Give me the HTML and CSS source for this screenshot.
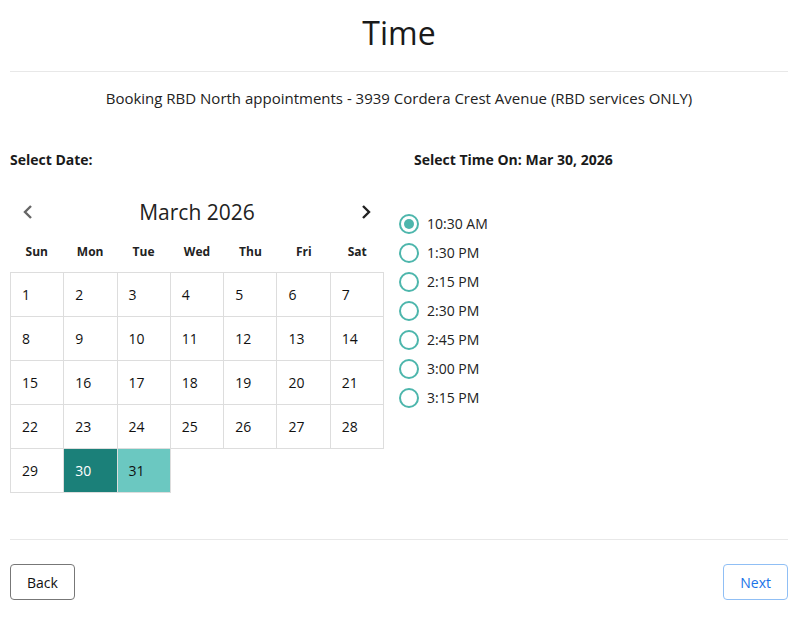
FILE: index.html
```html
<!DOCTYPE html>
<html lang="en">
<head>
<meta charset="UTF-8" />
<meta name="viewport" content="width=device-width, initial-scale=1" />
<title>Time</title>
<link rel="stylesheet" href="styles.css">
</head>
<body>
  <div class="page">
    <h1 class="title">Time</h1>
    <hr class="rule" />
    <p class="subtitle">Booking RBD North appointments - 3939 Cordera Crest Avenue (RBD services ONLY)</p>

    <div class="columns">
      <div class="date-col">
        <div class="label">Select Date:</div>
        <div class="month-nav">
          <button class="nav-btn prev">
            <svg width="12" height="16" viewBox="0 0 12 16"><path d="M9 2 L3 8 L9 14" fill="none" stroke="#666" stroke-width="2.4"/></svg>
          </button>
          <div class="month">March 2026</div>
          <button class="nav-btn next">
            <svg width="12" height="16" viewBox="0 0 12 16"><path d="M3 2 L9 8 L3 14" fill="none" stroke="#222" stroke-width="2.4"/></svg>
          </button>
        </div>
        <div class="weekdays">
          <div>Sun</div><div>Mon</div><div>Tue</div><div>Wed</div><div>Thu</div><div>Fri</div><div>Sat</div>
        </div>
        <div class="grid">
          <div class="day">1</div><div class="day">2</div><div class="day">3</div><div class="day">4</div><div class="day">5</div><div class="day">6</div><div class="day">7</div>
          <div class="day">8</div><div class="day">9</div><div class="day">10</div><div class="day">11</div><div class="day">12</div><div class="day">13</div><div class="day">14</div>
          <div class="day">15</div><div class="day">16</div><div class="day">17</div><div class="day">18</div><div class="day">19</div><div class="day">20</div><div class="day">21</div>
          <div class="day">22</div><div class="day">23</div><div class="day">24</div><div class="day">25</div><div class="day">26</div><div class="day">27</div><div class="day">28</div>
          <div class="day">29</div><div class="day selected">30</div><div class="day available">31</div>
        </div>
      </div>

      <div class="time-col">
        <div class="label time-label">Select Time On: Mar 30, 2026</div>
        <div class="times">
          <label class="slot"><span class="radio checked"></span>10:30 AM</label>
          <label class="slot"><span class="radio"></span>1:30 PM</label>
          <label class="slot"><span class="radio"></span>2:15 PM</label>
          <label class="slot"><span class="radio"></span>2:30 PM</label>
          <label class="slot"><span class="radio"></span>2:45 PM</label>
          <label class="slot"><span class="radio"></span>3:00 PM</label>
          <label class="slot"><span class="radio"></span>3:15 PM</label>
        </div>
      </div>
    </div>

    <hr class="rule footer-rule" />
    <div class="actions">
      <button class="btn back">Back</button>
      <button class="btn next-btn">Next</button>
    </div>
  </div>
</body>
</html>
```

FILE: styles.css
```css
body {
  margin: 0;
  background: #fff;
  color: #212121;
  font-family: "Open Sans", "DejaVu Sans", sans-serif;
}
.page {
  padding: 0 12px 0 10px;
}
.title {
  margin: 0;
  padding-top: 12px;
  height: 42px;
  font-size: 32px;
  font-weight: 400;
  line-height: 42px;
  text-align: center;
  color: #1a1a1a;
}
.rule {
  margin: 17px 0 0;
  border: none;
  border-top: 1px solid #e8e8e8;
}
.subtitle {
  margin: 16px 0 0;
  font-size: 15px;
  line-height: 20px;
  text-align: center;
  color: #222;
}
.columns {
  display: grid;
  grid-template-columns: 374px 1fr;
  gap: 15px;
  margin-top: 43px;
}
.label {
  font-size: 14px;
  font-weight: 700;
  line-height: 18px;
  color: #1a1a1a;
}
.month-nav {
  display: flex;
  align-items: center;
  justify-content: space-between;
  margin-top: 25px;
  height: 36px;
  padding: 0 12px;
}
.nav-btn {
  border: none;
  background: none;
  padding: 0;
  width: 12px;
  height: 16px;
  cursor: pointer;
}
.month {
  font-size: 21px;
  color: #222;
}
.weekdays {
  display: grid;
  grid-template-columns: repeat(7, 1fr);
  height: 42px;
  align-items: center;
  text-align: center;
  font-size: 12px;
  font-weight: 700;
  color: #222;
}
.grid {
  display: grid;
  grid-template-columns: repeat(7, 1fr);
  border-top: 1px solid #ddd;
  border-left: 1px solid #ddd;
  width: 373px;
}
.day {
  height: 43px;
  border-right: 1px solid #ddd;
  border-bottom: 1px solid #ddd;
  display: flex;
  align-items: center;
  padding-left: 11px;
  font-size: 14px;
  color: #111;
}
.day.selected {
  background: #1b8079;
  color: #fff;
}
.day.available {
  background: #6bc8c1;
}
.time-label {
  padding-left: 15px;
}
.times {
  margin-top: 40px;
  display: flex;
  flex-direction: column;
}
.slot {
  display: flex;
  align-items: center;
  gap: 8px;
  height: 29px;
  font-size: 14px;
  color: #222;
}
.radio {
  width: 16px;
  height: 16px;
  border: 2px solid #4db6ac;
  border-radius: 50%;
  display: flex;
  align-items: center;
  justify-content: center;
}
.radio.checked::after {
  content: "";
  width: 10px;
  height: 10px;
  border-radius: 50%;
  background: #4db6ac;
}
.footer-rule {
  margin-top: 46px;
}
.actions {
  display: flex;
  justify-content: space-between;
  margin-top: 24px;
}
.btn {
  height: 36px;
  padding: 0 16px;
  border-radius: 4px;
  background: #fff;
  font-family: inherit;
  font-size: 14px;
  cursor: pointer;
}
.back {
  border: 1px solid #777;
  color: #111;
}
.next-btn {
  border: 1px solid #90bff5;
  color: #1a73e8;
}
```
